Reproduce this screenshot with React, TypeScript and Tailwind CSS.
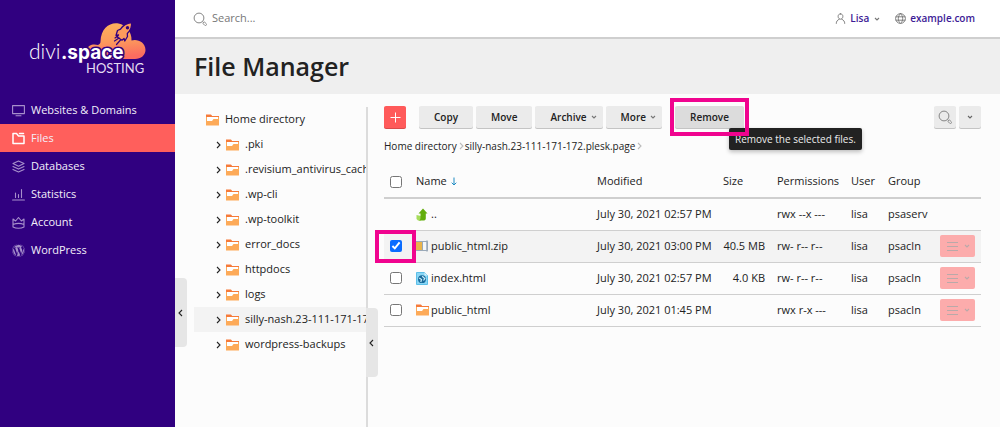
import { useState, type ReactNode } from "react";
import { FaWordpress } from "react-icons/fa";

function Logo() {
  return (
    <svg width="120" height="58" viewBox="0 0 120 58" role="img" aria-label="divi.space hosting">
      <defs>
        <linearGradient id="cloud" x1="0" y1="0" x2="0.15" y2="1">
          <stop offset="0" stopColor="#fdb45c" />
          <stop offset="0.55" stopColor="#fc9a5c" />
          <stop offset="1" stopColor="#fb6c60" />
        </linearGradient>
      </defs>
      <path
        d="M58 37V31.500C59 27 64 25.500 69 27C71 26 71.500 25 71.500 23.500C72 10 81 4 89.500 5.500C97 6.500 103 14 102.500 22.500C108 20.500 116.500 24 116.500 32C116.500 37 112 41 106 41H68Z"
        fill="url(#cloud)"
      />
      <path
        d="M102.500 4.500C97 5.200 93.500 8 91.500 11.200L88.500 12.500L87 17.500L89.500 16.800L88.200 19L93 22.200L95 20.500L95.800 23L98.500 18.500L98.300 15.500C101.500 12.500 103.200 9 102.500 4.500Z"
        fill="#fc9a5c"
        stroke="#300080"
        strokeWidth="1.300"
        strokeLinejoin="round"
      />
      <circle cx="98.500" cy="9.700" r="1.700" fill="#300080" />
      <path d="M90 20L85.500 23M91.500 22L87.500 26.500M88 18.500L86 20" stroke="#300080" strokeWidth="1.200" strokeLinecap="round" />
      <text x="0" y="41" fontFamily="Lato, sans-serif" fontWeight="300" fontSize="21" fill="#ffffff">
        divi
      </text>
      <text
        x="32"
        y="41"
        fontFamily="Inter, sans-serif"
        fontWeight="700"
        fontSize="19"
        fill="#ffffff"
        stroke="#300080"
        strokeWidth="3"
        strokeLinejoin="round"
        paintOrder="stroke"
      >
        .space
      </text>
      <text x="57" y="55" fontFamily="Lato, sans-serif" fontSize="13" fill="#e4dcf2">
        HOSTING
      </text>
    </svg>
  );
}

function Line({ children, size = 13 }: { children: ReactNode; size?: number }) {
  return (
    <svg
      width={size}
      height={size}
      viewBox="0 0 13 13"
      fill="none"
      stroke="currentColor"
      strokeWidth="1.1"
      strokeLinejoin="round"
      strokeLinecap="round"
      className="shrink-0"
      aria-hidden="true"
    >
      {children}
    </svg>
  );
}

function Chevron({ d, className }: { d: "left" | "right" | "down"; className?: string }) {
  const paths = { left: "M5 1L2 4L5 7", right: "M3 1L6 4L3 7", down: "M2 3L4 5L6 3" };
  return (
    <svg width="8" height="8" viewBox="0 0 8 8" fill="none" stroke="currentColor" className={className} aria-hidden="true">
      <path d={paths[d]} strokeWidth="1.1" />
    </svg>
  );
}

function Folder() {
  return (
    <svg width="13" height="12" viewBox="0 0 13 12" className="shrink-0" aria-hidden="true">
      <path d="M0 1H5L6 2H13V11.500H0Z" fill="#fdaa58" />
      <path d="M0 0.500H5L6 2H13V3H0Z" fill="#f67a3a" />
      <path d="M1 3H12V5H7.500L6 7H1Z" fill="#ffffff" />
    </svg>
  );
}

function Magnifier() {
  return (
    <svg width="14" height="14" viewBox="0 0 14 14" fill="none" stroke="#858585" aria-hidden="true">
      <circle cx="6" cy="6" r="4.900" />
      <path d="M9.600 9.600L10.600 10.600" />
      <rect x="-1.100" y="-2" width="2.200" height="4" rx="1" transform="translate(11.800 11.800) rotate(-45)" strokeWidth="0.900" />
    </svg>
  );
}

const nav = [
  {
    label: "Websites & Domains",
    icon: (
      <Line>
        <path d="M0.600 1.600H12.400V9.600H0.600ZM4 11.800H9" />
      </Line>
    ),
  },
  {
    label: "Files",
    icon: (
      <Line>
        <path d="M1 1.600H4.500L6.500 4H12V11.500H1Z M7.500 1.600H11.500" strokeWidth="1.500" />
      </Line>
    ),
  },
  {
    label: "Databases",
    icon: (
      <Line>
        <path d="M6.500 1L12 3.600L6.500 6.200L1 3.600ZM1 6.500L6.500 9.100L12 6.500M1 9.400L6.500 12L12 9.400" />
      </Line>
    ),
  },
  {
    label: "Statistics",
    icon: (
      <Line>
        <path d="M0.600 12H12.400M3.500 9.500V5M6.500 9.500V6.500M9.500 9.500V1.500" />
      </Line>
    ),
  },
  {
    label: "Account",
    icon: (
      <Line>
        <path d="M1 3L3.600 5L6.500 1.500L9.400 5L12 3V11C9 12.500 4 12.500 1 11ZM1 8.500C4 7.300 9 7.300 12 8.500" />
      </Line>
    ),
  },
  { label: "WordPress", icon: <FaWordpress size={13} aria-hidden="true" /> },
];

const tree = [
  ".pki",
  ".revisium_antivirus_cache",
  ".wp-cli",
  ".wp-toolkit",
  "error_docs",
  "httpdocs",
  "logs",
  "silly-nash.23-111-171-172.plesk.page",
  "wordpress-backups",
];

const UpIcon = (
  <svg width="12" height="13" viewBox="0 0 12 13" className="shrink-0" aria-hidden="true">
    <path d="M0.500 7L5 8V12.500H2L0.500 11Z" fill="#a5dc5a" />
    <path d="M7 0.500L11.500 5.500H9.800V10.500C9.800 12 8.500 12.500 7.500 12.500H2.500C4.200 12 4.500 11 4.500 9.500V5.500H2.500Z" fill="#62ad0c" />
  </svg>
);

const ZipIcon = (
  <svg width="12" height="12" viewBox="0 0 12 12" className="shrink-0" aria-hidden="true">
    <path d="M0 1H7V11H0Z" fill="#e9b44c" />
    <path d="M6.500 2H11V10H6.500Z" fill="#f4f7fa" />
    <path d="M0 1.500H11.500V10.500H0" fill="none" stroke="#9aa9b8" />
    <path d="M6.500 1.500V10.500" stroke="#9aa9b8" />
    <path d="M11 0.500V11.500" stroke="#9aa9b8" strokeWidth="1.500" />
  </svg>
);

const HtmlIcon = (
  <svg width="12" height="13" viewBox="0 0 12 13" className="shrink-0" aria-hidden="true">
    <path d="M0.500 0.500H8.500L11.500 3.500V12.500H0.500Z" fill="#8ad6f5" stroke="#5cbfe8" />
    <path d="M8.500 0.500V3.500H11.500Z" fill="#d8f1fc" />
    <circle cx="6" cy="7.200" r="3.900" fill="#17699a" />
    <path d="M3.200 6L5.500 7.500L4.800 10M6.200 4.200L8.800 6.500L7.500 8.500" stroke="#c9edfb" strokeWidth="1.200" fill="none" />
  </svg>
);

const files = [
  { name: "..", icon: UpIcon, modified: "July 30, 2021 02:57 PM", size: "", perms: "rwx --x ---", group: "psaserv", parent: true },
  { name: "public_html.zip", icon: ZipIcon, modified: "July 30, 2021 03:00 PM", size: "40.5 MB", perms: "rw- r-- r--", group: "psacln" },
  { name: "index.html", icon: HtmlIcon, modified: "July 30, 2021 02:57 PM", size: "4.0 KB", perms: "rw- r-- r--", group: "psacln" },
  { name: "public_html", icon: <Folder />, modified: "July 30, 2021 01:45 PM", size: "", perms: "rwx r-x ---", group: "psacln" },
];

function ToolButton({ children, menu, active }: { children: ReactNode; menu?: boolean; active?: boolean }) {
  return (
    <button
      type="button"
      className={`flex h-[22px] items-center rounded-xs text-[10px] font-semibold text-[#222] shadow-[0_1px_0_#c4c4c4] ${
        menu ? "gap-[3px] pr-[5px] pl-[15px]" : "px-[15px]"
      } ${active ? "bg-[#dcdcdc]" : "bg-[#ebebeb]"}`}
    >
      {children}
      {menu && <Chevron d="down" className="text-[#777]" />}
    </button>
  );
}

export default function App() {
  const [selected, setSelected] = useState<string[]>(["public_html.zip"]);
  const toggle = (name: string) =>
    setSelected((s) => (s.includes(name) ? s.filter((n) => n !== name) : [...s, name]));

  return (
    <div className="flex min-h-screen bg-[#fcfcfc] font-['Open_Sans',sans-serif] text-[11px] text-[#222]">
      <aside className="relative w-[175px] shrink-0 bg-[#300080]">
        <div className="pt-[18px] pl-[29px]">
          <Logo />
        </div>
        <nav className="mt-5">
          {nav.map((item) => (
            <a
              key={item.label}
              href="#"
              className={`flex h-7 items-center gap-[6px] pl-3 ${item.label === "Files" ? "bg-[#ff5f5c]" : ""}`}
            >
              <span className={item.label === "Files" ? "text-white" : "text-[#a78fcb]"}>{item.icon}</span>
              <span className="text-[#f3effa]">{item.label}</span>
            </a>
          ))}
        </nav>
        <button
          type="button"
          aria-label="Collapse menu"
          className="absolute top-[278px] left-full flex h-[69px] w-3 items-center justify-center rounded-r-sm bg-[#e6e6e6]"
        >
          <Chevron d="left" />
        </button>
      </aside>

      <div className="flex min-w-0 flex-1 flex-col">
        <header className="flex h-[39px] items-center border-b-2 border-[#cfcfcf] bg-white pr-[25px] pl-[18px]">
          <label className="flex flex-1 items-center gap-[5px]">
            <Magnifier />
            <input type="text" aria-label="Search" placeholder="Search..." className="w-40 outline-none placeholder:text-[#777]" />
          </label>
          <button type="button" className="flex items-center gap-1 text-[10px] font-semibold text-[#3d1b96]">
            <span className="text-[#777]">
              <Line size={11}>
                <path d="M6.500 1C8.200 1 9.300 2.200 9.300 4C9.300 6 8 7.300 6.500 7.300C5 7.300 3.700 6 3.700 4C3.700 2.200 4.800 1 6.500 1ZM1.500 12.300C1.500 9.800 2.700 8.500 5 7.300M11.500 12.300C11.500 9.800 10.300 8.500 8 7.300" />
              </Line>
            </span>
            Lisa
            <Chevron d="down" className="text-[#777]" />
          </button>
          <a href="#" className="ml-[14px] flex items-center gap-1 text-[10px] font-semibold text-[#3d1b96]">
            <span className="text-[#777]">
              <Line size={11}>
                <path d="M6.500 0.700A5.800 5.800 0 1 0 6.500 12.300A5.800 5.800 0 1 0 6.500 0.700ZM6.500 0.700C3 3.500 3 9.500 6.500 12.300C10 9.500 10 3.500 6.500 0.700M1.300 4.500H11.700M1.300 8.500H11.700" />
              </Line>
            </span>
            example.com
          </a>
        </header>

        <div className="flex h-[55px] items-center bg-[#efefef] pl-[19px]">
          <h1 className="text-[25px] font-semibold">File Manager</h1>
        </div>

        <div className="flex flex-1 pl-[19px]">
          <div className="relative mt-[13px] w-[174px] shrink-0 border-r-2 border-[#dcdcdc]">
            <div className="overflow-hidden whitespace-nowrap">
              <div className="flex h-[25px] items-center gap-[6px] pl-3">
                <Folder />
                Home directory
              </div>
              <ul>
                {tree.map((name) => (
                  <li
                    key={name}
                    className={`flex h-[25px] items-center pl-5 ${name.startsWith("silly") ? "bg-[#f3f3f3]" : ""}`}
                  >
                    <Chevron d="right" className="mr-1 shrink-0" />
                    <Folder />
                    <span className="ml-[6px]">{name}</span>
                  </li>
                ))}
              </ul>
            </div>
            <button
              type="button"
              aria-label="Collapse tree"
              className="absolute top-[201px] left-[172px] flex h-[69px] w-3 items-center justify-center rounded-r-sm bg-[#e6e6e6]"
            >
              <Chevron d="left" />
            </button>
          </div>

          <main className="min-w-0 flex-1 pt-3 pr-[19px] pl-4">
            <div className="flex items-center">
              <button
                type="button"
                aria-label="Add"
                className="mr-[13px] flex size-[22px] items-center justify-center rounded-xs bg-[#ff5a5a] text-white shadow-[0_1px_0_#d94a4a]"
              >
                <svg width="11" height="11" viewBox="0 0 11 11" stroke="currentColor" aria-hidden="true">
                  <path d="M5.500 0.500V10.500M0.500 5.500H10.500" />
                </svg>
              </button>
              <div className="flex gap-[3px]">
                <ToolButton>Copy</ToolButton>
                <ToolButton>Move</ToolButton>
                <ToolButton menu>Archive</ToolButton>
                <ToolButton menu>More</ToolButton>
              </div>
              <div className="relative ml-[13px]">
                <ToolButton active>Remove</ToolButton>
                <div
                  role="tooltip"
                  className="absolute top-[22px] left-[54px] flex h-[22px] items-center rounded-xs bg-[#222] px-[6px] text-[10px] whitespace-nowrap text-[#eee] shadow-[0_2px_4px_rgba(0,0,0,0.25)]"
                >
                  Remove the selected files.
                </div>
                <div className="pointer-events-none absolute -inset-x-[5px] -inset-y-2 border-4 border-[#f0048f]" />
              </div>
              <div className="ml-auto flex gap-[3px]">
                <button
                  type="button"
                  aria-label="Search files"
                  className="flex size-[22px] items-center justify-center rounded-xs bg-[#ebebeb] shadow-[0_1px_0_#c4c4c4]"
                >
                  <Magnifier />
                </button>
                <button
                  type="button"
                  aria-label="Search options"
                  className="flex size-[22px] items-center justify-center rounded-xs bg-[#ebebeb] text-[#666] shadow-[0_1px_0_#c4c4c4]"
                >
                  <Chevron d="down" />
                </button>
              </div>
            </div>

            <div className="mt-[10px] flex h-4 items-center text-[10px]">
              <a href="#">Home directory</a>
              <Chevron d="right" className="text-[#bbb]" />
              <a href="#">silly-nash.23-111-171-172.plesk.page</a>
              <Chevron d="right" className="text-[#bbb]" />
            </div>

            <table className="mt-3 w-full table-fixed text-left whitespace-nowrap">
              <colgroup>
                <col className="w-8" />
                <col />
                <col className="w-[126px]" />
                <col className="w-[54px]" />
                <col className="w-[74px]" />
                <col className="w-[37px]" />
                <col className="w-[52px]" />
                <col className="w-[41px]" />
              </colgroup>
              <thead>
                <tr className="h-8 border-b-2 border-[#cfcfcf]">
                  <th className="pl-[6px]">
                    <input
                      type="checkbox"
                      aria-label="Select all"
                      className="block size-3"
                      checked={selected.length === 3}
                      onChange={() =>
                        setSelected(selected.length === 3 ? [] : files.filter((f) => !f.parent).map((f) => f.name))
                      }
                    />
                  </th>
                  <th className="font-normal">
                    <span className="flex items-center gap-1">
                      Name
                      <svg width="6" height="9" viewBox="0 0 6 9" fill="none" stroke="#1e8bc3" aria-hidden="true">
                        <path d="M3 0.500V8M0.700 5.700L3 8L5.300 5.700" />
                      </svg>
                    </span>
                  </th>
                  <th className="font-normal">Modified</th>
                  <th className="font-normal">Size</th>
                  <th className="font-normal">Permissions</th>
                  <th className="font-normal">User</th>
                  <th className="font-normal">Group</th>
                  <th aria-label="Actions" />
                </tr>
              </thead>
              <tbody>
                {files.map((f) => {
                  const isZip = f.name === "public_html.zip";
                  return (
                    <tr
                      key={f.name}
                      className={`h-8 border-b border-[#cfcfcf] ${selected.includes(f.name) ? "bg-[#f3f3f3]" : ""}`}
                    >
                      <td className="relative pl-[6px]">
                        {!f.parent && (
                          <input
                            type="checkbox"
                            aria-label={`Select ${f.name}`}
                            className="block size-3 accent-[#0a6cff]"
                            checked={selected.includes(f.name)}
                            onChange={() => toggle(f.name)}
                          />
                        )}
                        {isZip && (
                          <div className="pointer-events-none absolute -inset-y-px -left-[9px] w-[41px] border-4 border-[#f0048f]" />
                        )}
                      </td>
                      <td>
                        <span className="flex items-center">
                          <span className="w-[15px] shrink-0">{f.icon}</span>
                          {f.name}
                        </span>
                      </td>
                      <td>{f.modified}</td>
                      <td className="pr-3 text-right">{f.size}</td>
                      <td>{f.perms}</td>
                      <td>lisa</td>
                      <td>{f.group}</td>
                      <td>
                        {!f.parent && (
                          <button
                            type="button"
                            aria-label={`Actions for ${f.name}`}
                            className="flex h-[22px] w-[35px] items-center justify-between rounded-xs bg-[#fcacac] pr-1 pl-[7px] text-[#b9a9a9]"
                          >
                            <svg width="11" height="9" viewBox="0 0 11 9" stroke="currentColor" aria-hidden="true">
                              <path d="M0 0.500H11M0 4.500H11M0 8.500H11" />
                            </svg>
                            <Chevron d="down" />
                          </button>
                        )}
                      </td>
                    </tr>
                  );
                })}
              </tbody>
            </table>
          </main>
        </div>
      </div>
    </div>
  );
}
